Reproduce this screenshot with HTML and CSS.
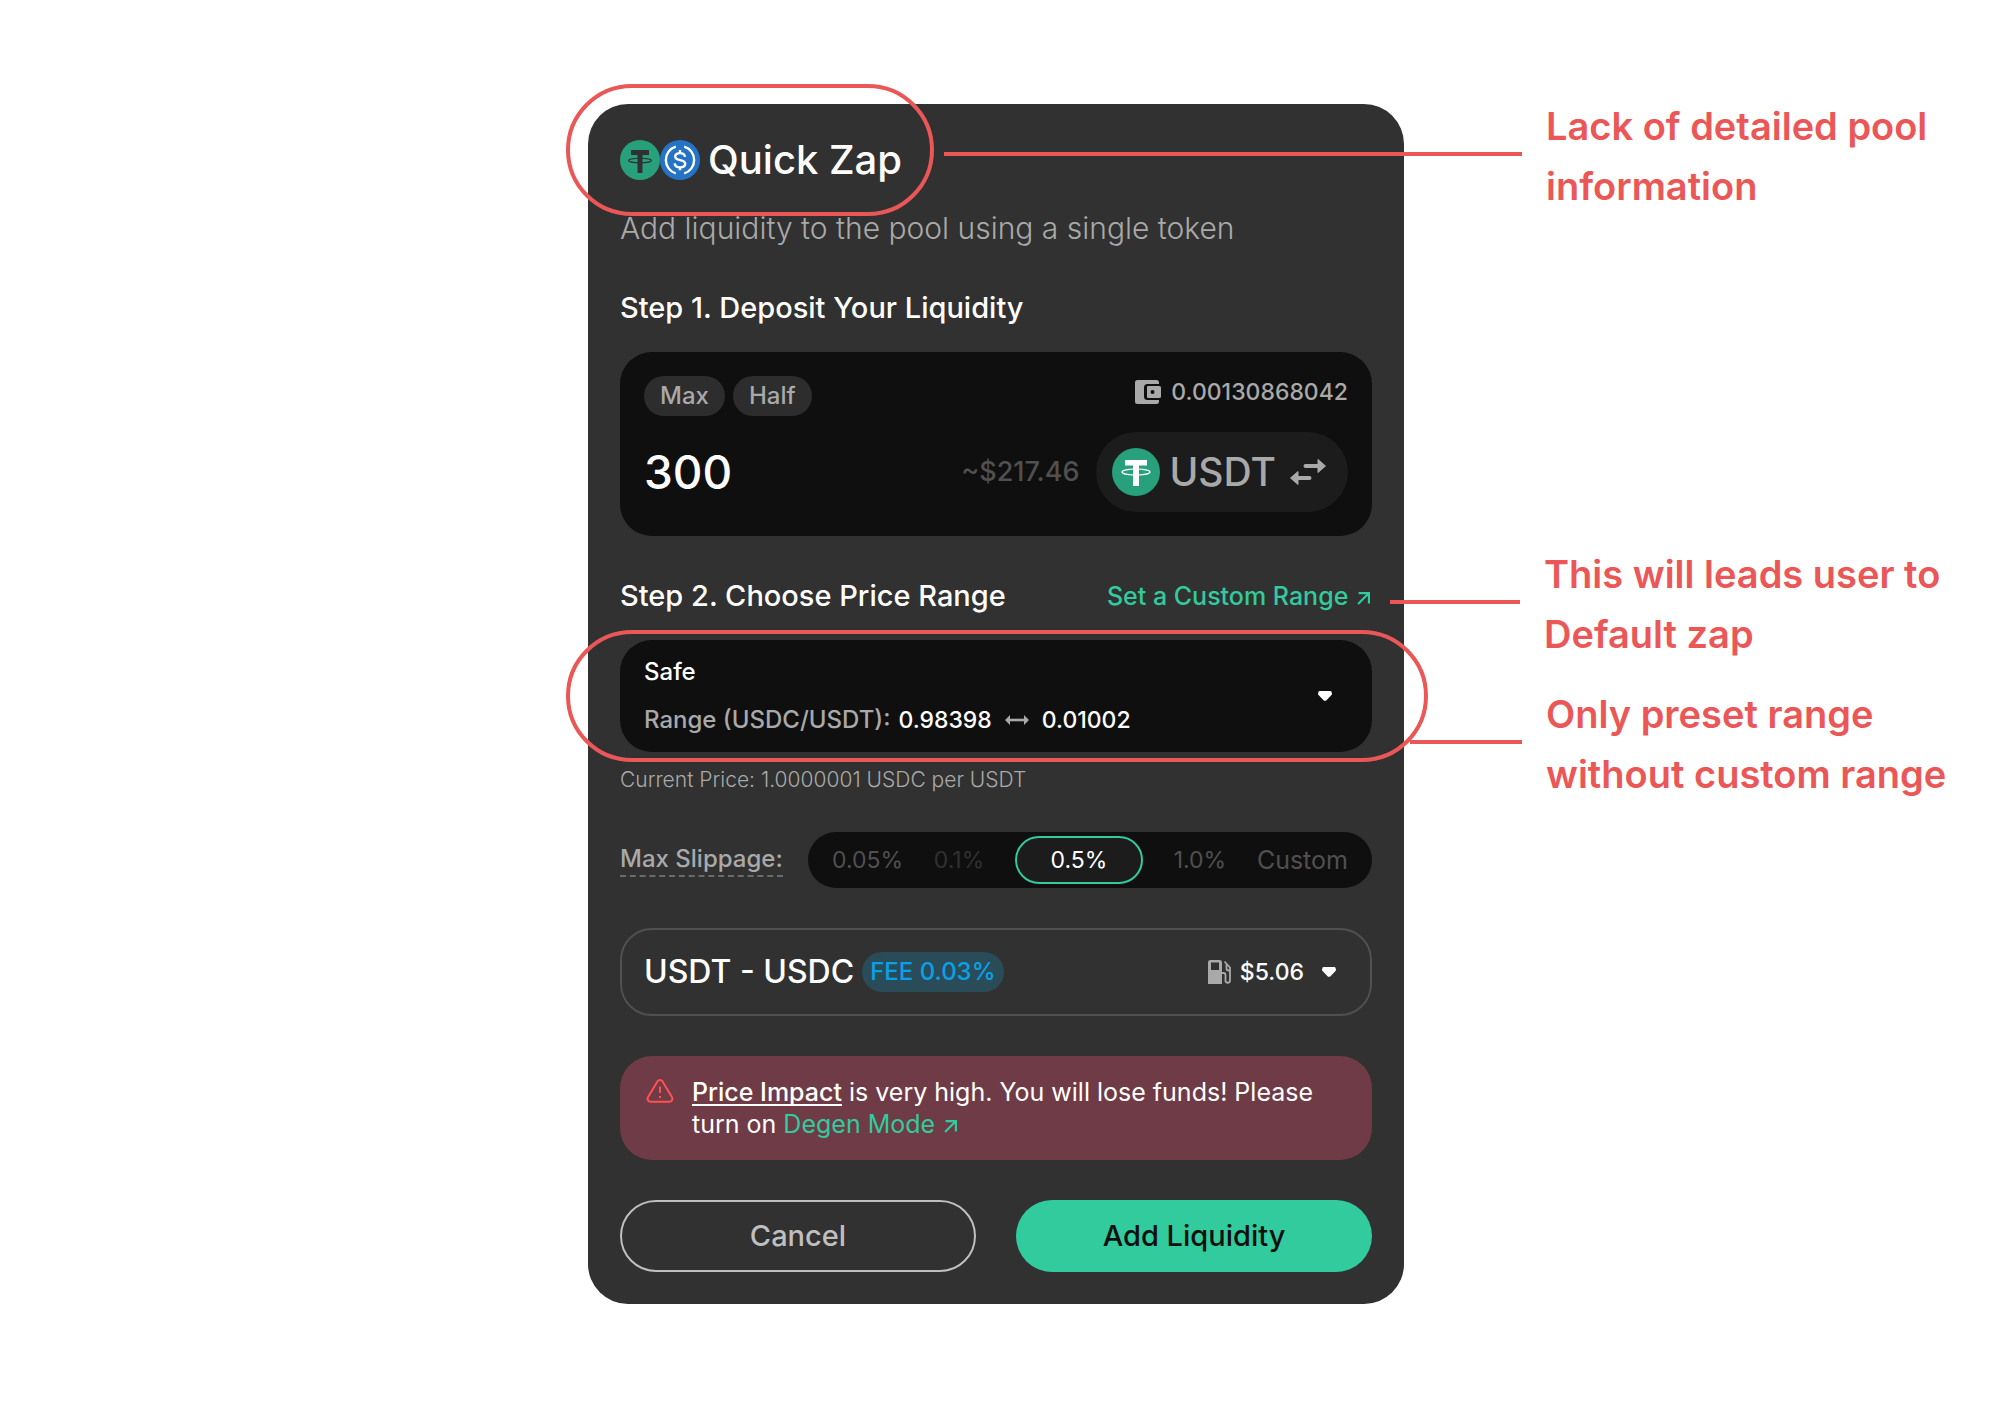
FILE: index.html
```html
<!DOCTYPE html>
<html lang="en">

<head>
    <meta charset="UTF-8">
    <meta name="viewport" content="width=device-width, initial-scale=1.0">
    <title>Quick Zap</title>
    <link rel="stylesheet" href="styles.css">
</head>

<body>

    <main class="page">
        <form class="card">

            <header class="title-row">
                <svg class="token" viewBox="0 0 40 40" aria-hidden="true">
                    <circle cx="20" cy="20" r="20" fill="#29a07c" />
                    <path d="M11 10h18v5h-6.500v18h-5V15H11z" fill="#313131" />
                    <ellipse cx="20" cy="20.500" rx="11.500" ry="2.300" fill="none" stroke="#313131" stroke-width="1.100" />
                </svg>
                <svg class="token" viewBox="0 0 40 40" aria-hidden="true">
                    <circle cx="20" cy="20" r="20" fill="#2573c5" />
                    <g fill="none" stroke="#fff" stroke-width="2.400">
                        <path d="M15.800 6.600a14 14 0 0 0 0 26.800M24.200 6.600a14 14 0 0 1 0 26.800" />
                        <path d="M25 16.800c-.3-2.600-2.200-3.700-5-3.700s-4.800 1.200-4.800 3.400c0 2.300 1.800 3 4.900 3.600 3.400.6 5.100 1.500 5.100 3.700 0 2.300-2.100 3.600-5.100 3.600-3.200 0-5.200-1.300-5.400-4M20 10v3.200M20 27v3.200" />
                    </g>
                </svg>
                <h1 class="title">Quick Zap</h1>
                <div class="callout callout-pool">
                    <span class="callout-line"></span>
                    <p class="callout-text">Lack of detailed pool<br>information</p>
                </div>
            </header>
            <p class="subtitle">Add liquidity to the pool using a single token</p>

            <h2 class="step"><label for="amount">Step 1. Deposit Your Liquidity</label></h2>
            <section class="deposit">
                <div class="deposit-row">
                    <div class="chips">
                        <button type="button" class="chip">Max</button>
                        <button type="button" class="chip">Half</button>
                    </div>
                    <div class="balance">
                        <svg class="wallet" viewBox="0 0 26 24" aria-hidden="true">
                            <path d="M2.500 0h19A2.500 2.500 0 0 1 24 2.500V4H12.500A3.500 3.500 0 0 0 9 7.500v9a3.500 3.500 0 0 0 3.500 3.500H24v1.500a2.500 2.500 0 0 1-2.500 2.500h-19A2.500 2.500 0 0 1 0 21.500v-19A2.500 2.500 0 0 1 2.500 0z" />
                            <path fill-rule="evenodd" d="M13 6h11.500A1.500 1.500 0 0 1 26 7.500v9a1.500 1.500 0 0 1-1.500 1.500H13a1 1 0 0 1-1-1V7a1 1 0 0 1 1-1zm4.500 4a2 2 0 1 0 0 4 2 2 0 0 0 0-4z" />
                        </svg>
                        <span>0.00130868042</span>
                    </div>
                </div>
                <div class="deposit-row">
                    <input class="amount" id="amount" type="text" inputmode="decimal" value="300">
                    <span class="estimate">~$217.46</span>
                    <button type="button" class="token-select">
                        <svg class="token-large" viewBox="0 0 48 48" aria-hidden="true">
                            <circle cx="24" cy="24" r="24" fill="#29a07c" />
                            <path d="M13 12h22v5.500h-8V38h-6V17.500h-8z" fill="#fff" />
                            <ellipse cx="24" cy="24" rx="14" ry="3" fill="none" stroke="#fff" stroke-width="1.200" />
                        </svg>
                        <span>USDT</span>
                        <svg class="swap" viewBox="0 0 36 26" aria-hidden="true">
                            <path d="M15.500 7H30M6 19h13.500" fill="none" stroke="currentColor" stroke-width="4" stroke-linecap="round" />
                            <path d="M28 0.500 35.500 7 28 13.500zM8 12.500 0.500 19 8 25.500z" fill="currentColor" stroke="currentColor" stroke-linejoin="round" />
                        </svg>
                    </button>
                </div>
            </section>

            <div class="step-row">
                <h2 class="step">Step 2. Choose Price Range</h2>
                <a class="link" href="#custom-range">Set a Custom Range
                    <svg class="arrow" viewBox="0 0 12 12" aria-hidden="true">
                        <path d="M1 11 11 1M1.500 1H11v9.500" />
                    </svg>
                </a>
                <div class="callout callout-custom">
                    <span class="callout-line"></span>
                    <p class="callout-text">This will leads user to<br>Default zap</p>
                </div>
            </div>
            <div class="range-wrap">
                <button type="button" class="range" aria-haspopup="listbox">
                    <span class="range-info">
                        <span>Safe</span>
                        <span class="range-values">
                            <span class="muted">Range (USDC/USDT):</span>
                            <span class="range-value">0.98398</span>
                            <svg class="between" viewBox="0 0 24 10" aria-hidden="true">
                                <path d="M4 5h16" stroke="#a9a9a9" stroke-width="2.600" />
                                <path d="M5 0v10L0 5zM19 0v10l5-5z" fill="#a9a9a9" />
                            </svg>
                            <span class="range-value">0.01002</span>
                        </span>
                    </span>
                    <svg class="caret" viewBox="0 0 14 10" aria-hidden="true">
                        <path d="M1.500 1h11L13 3 7.500 8.800h-1L1 3z" />
                    </svg>
                </button>
                <div class="callout callout-preset">
                    <span class="callout-line"></span>
                    <p class="callout-text">Only preset range<br>without custom range</p>
                </div>
            </div>
            <p class="price">Current Price: 1.0000001 USDC per USDT</p>

            <div class="slippage" role="radiogroup" aria-labelledby="slippageLabel">
                <span class="slippage-label" id="slippageLabel">Max Slippage:</span>
                <div class="slippage-options">
                    <label class="option"><input type="radio" name="slippage">0.05%</label>
                    <label class="option option-faint"><input type="radio" name="slippage">0.1%</label>
                    <label class="option"><input type="radio" name="slippage" checked>0.5%</label>
                    <label class="option"><input type="radio" name="slippage">1.0%</label>
                    <label class="option option-custom"><input type="radio" name="slippage">Custom</label>
                </div>
            </div>

            <button type="button" class="route" aria-expanded="false">
                <span class="pair">USDT - USDC</span>
                <span class="fee">FEE 0.03%</span>
                <svg class="gas" viewBox="0 0 24 24" aria-hidden="true">
                    <path fill-rule="evenodd" fill="#a9a9a9" d="M2.500 0h9A2.500 2.500 0 0 1 14 2.500V24H0V2.500A2.500 2.500 0 0 1 2.500 0zM3 2.500V10h8V2.500z" />
                    <path d="M14 13h1.500a2 2 0 0 1 2 2v5.500a2.200 2.200 0 0 0 4.500 0V7.500L16.500 1.500M18.500 4v4.500a2 2 0 0 0 2 2H22" fill="none" stroke="#a9a9a9" stroke-width="1.800" />
                </svg>
                <span class="gas-price">$5.06</span>
                <svg class="caret" viewBox="0 0 14 10" aria-hidden="true">
                    <path d="M1.500 1h11L13 3 7.500 8.800h-1L1 3z" />
                </svg>
            </button>

            <div class="warning" role="alert">
                <svg class="warning-icon" viewBox="0 0 28 24" aria-hidden="true">
                    <path d="M11.500 2.400a3 3 0 0 1 5 0l9.400 15.700a3 3 0 0 1-2.600 4.700H4.700a3 3 0 0 1-2.600-4.700z" />
                    <path d="M14 7.500v6.500M14 17v2" />
                </svg>
                <p class="warning-text">
                    <span class="impact">Price Impact</span> is very high. You will lose funds! Please turn on
                    <a class="warning-link" href="#degen-mode">Degen Mode
                        <svg class="arrow" viewBox="0 0 12 12" aria-hidden="true">
                            <path d="M1 11 11 1M1.500 1H11v9.500" />
                        </svg></a>
                </p>
            </div>

            <div class="actions">
                <button type="button" class="btn btn-outline">Cancel</button>
                <button type="submit" class="btn btn-primary">Add Liquidity</button>
            </div>
        </form>
    </main>

</body>

</html>
```

FILE: styles.css
```css
*,
*::after {
    margin: 0;
    padding: 0;
    box-sizing: border-box;
}

body {
    background-color: #fff;
    font-family: "Inter", sans-serif;
    font-size: 24px;
    line-height: 32px;
    color: #fff;
}

button,
input {
    font: inherit;
    color: inherit;
    border: none;
    background: none;
}

button {
    cursor: pointer;
}

svg {
    flex: none;
}

/* the right side is a bit wider, it holds the notes */
.page {
    display: grid;
    grid-template-columns: minmax(0, 588fr) minmax(0, 816fr) minmax(0, 608fr);
    padding: 104px 0;
}

.card {
    grid-column: 2;
    background-color: #313131;
    border-radius: 40px;
    padding: 32px;
}

.muted {
    color: #a9a9a9;
}

/* header */
.title-row {
    position: relative;
    display: flex;
    align-items: center;
    height: 48px;
}

.token {
    width: 40px;
    height: 40px;
}

.title {
    font-size: 40px;
    line-height: 48px;
    font-weight: 500;
    margin-left: 8px;
}

.subtitle {
    margin-top: 28px;
    font-size: 30px;
    font-weight: 300;
    color: #a9a9a9;
}

.step {
    font-size: 29px;
    font-weight: 500;
}

.subtitle + .step {
    margin-top: 48px;
}

/* step 1 */
.deposit {
    margin-top: 28px;
    padding: 24px;
    background-color: #0f0f0f;
    border-radius: 32px;
    display: flex;
    flex-direction: column;
    gap: 16px;
}

.deposit-row {
    display: flex;
    align-items: center;
    justify-content: space-between;
}

.chips {
    display: flex;
    gap: 8px;
}

.chip {
    height: 40px;
    padding: 0 16px;
    border-radius: 20px;
    background-color: #2d2d2d;
    color: #a9a9a9;
    font-weight: 500;
}

.balance {
    display: flex;
    align-items: center;
    gap: 10px;
    align-self: flex-start;
    color: #a9a9a9;
    font-size: 23px;
    font-weight: 500;
}

.wallet {
    width: 26px;
    height: 24px;
    fill: currentColor;
}

.amount {
    flex: 1;
    width: 0;
    min-width: 0;
    font-size: 46px;
    line-height: 56px;
    font-weight: 500;
}

.estimate {
    font-size: 27px;
    font-weight: 500;
    color: #505050;
    margin-right: 16px;
}

.token-select {
    display: flex;
    align-items: center;
    height: 80px;
    padding: 0 22px 0 16px;
    border-radius: 40px;
    background-color: #1c1c1c;
    color: #a9a9a9;
    font-size: 39px;
    font-weight: 500;
}

.token-large {
    width: 48px;
    height: 48px;
    margin-right: 10px;
}

.swap {
    width: 36px;
    height: 26px;
    margin-left: 14px;
}

/* step 2 */
.step-row {
    position: relative;
    display: flex;
    align-items: center;
    justify-content: space-between;
    margin-top: 44px;
}

.link,
.warning-link {
    color: #31cb9e;
    text-decoration: none;
}

.link {
    font-size: 25px;
    font-weight: 500;
}

.arrow {
    width: 13px;
    height: 13px;
    margin: 0 2px;
    fill: none;
    stroke: currentColor;
    stroke-width: 2;
}

.range-wrap {
    position: relative;
    margin-top: 28px;
}

.range {
    width: 100%;
    min-height: 112px;
    padding: 0 40px 0 24px;
    display: flex;
    align-items: center;
    justify-content: space-between;
    border-radius: 32px;
    background-color: #0f0f0f;
    font-weight: 500;
    text-align: left;
}

.range-info {
    display: flex;
    flex-direction: column;
    gap: 16px;
}

.range-values {
    display: flex;
    align-items: center;
    gap: 8px;
}

.range-value {
    font-size: 23px;
}

.between {
    width: 24px;
    height: 10px;
    margin: 0 5px;
}

.caret {
    width: 14px;
    height: 10px;
    fill: #fff;
    stroke: #fff;
    stroke-width: 2;
    stroke-linejoin: round;
}

.price {
    margin-top: 16px;
    font-size: 21px;
    line-height: 24px;
    font-weight: 300;
    color: #a9a9a9;
}

/* slippage */
.slippage {
    display: flex;
    align-items: center;
    justify-content: space-between;
    margin-top: 40px;
}

.slippage-label {
    color: #a9a9a9;
    font-weight: 500;
    border-bottom: 2px dashed #6a6a6a;
}

.slippage-options {
    width: 75%;
    height: 56px;
    padding: 0 24px;
    display: flex;
    align-items: center;
    justify-content: space-between;
    border-radius: 28px;
    background-color: #0f0f0f;
    font-size: 23px;
}

.option {
    position: relative;
    color: #505050;
    cursor: pointer;
}

.option input {
    position: absolute;
    opacity: 0;
}

.option-faint {
    color: #313131;
}

.option-custom {
    font-size: 25px;
}

.option:has(input:checked) {
    display: flex;
    align-items: center;
    justify-content: center;
    width: 128px;
    height: 48px;
    border: 2px solid #31cb9e;
    border-radius: 24px;
    background-color: #1c1c1c;
    color: #fff;
}

/* route */
.route {
    width: 100%;
    height: 88px;
    margin-top: 40px;
    padding: 0 34px 0 22px;
    display: flex;
    align-items: center;
    border: 2px solid #505050;
    border-radius: 32px;
    font-weight: 500;
}

.pair {
    font-size: 32px;
}

.fee {
    height: 40px;
    line-height: 40px;
    margin: 0 auto 0 8px;
    padding: 0 8px;
    border-radius: 20px;
    background-color: #2a4b58;
    color: #08a1e7;
}

.gas {
    width: 24px;
    height: 24px;
}

.gas-price {
    margin: 0 18px 0 8px;
    font-size: 23px;
}

/* warning */
.warning {
    display: flex;
    align-items: flex-start;
    gap: 16px;
    margin-top: 40px;
    padding: 20px 24px;
    border-radius: 32px;
    background-color: #6f3b46;
    font-size: 25px;
}

.warning-icon {
    width: 32px;
    height: 24px;
    margin-top: 3px;
    fill: none;
    stroke: #ff5252;
    stroke-width: 2;
    stroke-linejoin: round;
}

.impact {
    font-weight: 500;
    text-decoration: underline;
    text-decoration-thickness: 2px;
    text-decoration-skip-ink: none;
    text-underline-offset: 3px;
}

/* buttons */
.actions {
    display: grid;
    grid-template-columns: 1fr 1fr;
    gap: 40px;
    margin-top: 40px;
}

.btn {
    height: 72px;
    border-radius: 36px;
    font-size: 29px;
    font-weight: 500;
}

.btn-outline {
    border: 2px solid #c0bfbf;
    color: #c0bfbf;
}

.btn-primary {
    background-color: #31cb9e;
    color: #0f0f0f;
}

/* notes drawn over the card */
.title-row::after,
.range-wrap::after {
    content: "";
    position: absolute;
    left: -54px;
    height: 132px;
    border: 4px solid #eb5757;
    border-radius: 66px;
    pointer-events: none;
}

.title-row::after {
    top: -52px;
    width: 368px;
}

.range-wrap::after {
    top: -10px;
    right: -56px;
}

.callout {
    position: absolute;
    display: flex;
    align-items: flex-start;
    gap: 24px;
    color: #eb5757;
}

.callout-line {
    height: 4px;
    margin-top: 56px;
    background-color: #eb5757;
}

.callout-text {
    font-size: 38px;
    line-height: 60px;
    font-weight: 600;
    white-space: nowrap;
}

.callout-pool {
    top: -40px;
    left: 324px;
}

.callout-pool .callout-line {
    width: 578px;
}

.callout-custom {
    top: -36px;
    left: calc(100% + 18px);
}

.callout-custom .callout-line {
    width: 130px;
}

.callout-preset {
    top: 44px;
    left: calc(100% + 38px);
}

.callout-preset .callout-line {
    width: 112px;
}
```
